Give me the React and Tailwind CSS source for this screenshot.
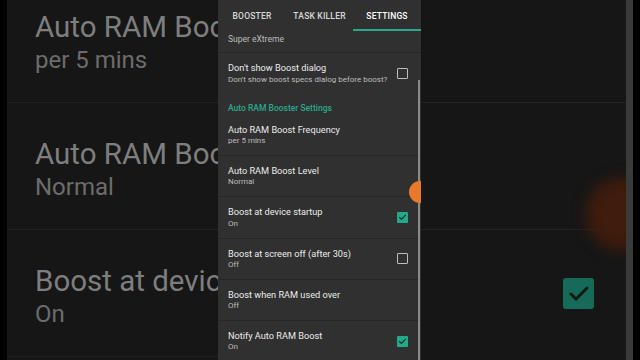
import { Check } from 'lucide-react';

const rows = [
  { title: 'Auto RAM Boost Frequency', sub: 'per 5 mins' },
  { title: 'Auto RAM Boost Level', sub: 'Normal' },
  { title: 'Boost at device startup', sub: 'On', box: 'on' },
  { title: 'Boost at screen off (after 30s)', sub: 'Off', box: 'off' },
  { title: 'Boost when RAM used over', sub: 'Off' },
  { title: 'Notify Auto RAM Boost', sub: 'On', box: 'on' },
];

const bgRows = [
  { title: 'Auto RAM Boost Frequency', sub: 'per 5 mins' },
  { title: 'Auto RAM Boost Level', sub: 'Normal' },
  { title: 'Boost at device startup', sub: 'On' },
];

function Box({ state }) {
  if (state === 'on') {
    return (
      <div className="w-[11px] h-[11px] rounded-[1px] bg-[#22a88a] flex items-center justify-center">
        <Check size={9} strokeWidth={3} className="text-[#1c2a26]" />
      </div>
    );
  }
  return <div className="w-[11px] h-[11px] rounded-[1px] border-[1.5px] border-[#bdbdbd]" />;
}

function Phone() {
  return (
    <div className="relative w-[203px] h-full bg-[#303030] overflow-hidden shrink-0">
      {/* Tabs */}
      <div className="h-[32px] flex items-center text-[8.5px] font-medium tracking-[0.2px] text-[#d8d8d8]">
        <div className="w-[68px] text-center">BOOSTER</div>
        <div className="w-[67px] text-center">TASK KILLER</div>
        <div className="relative w-[68px] h-full flex items-center justify-center text-white">
          SETTINGS
          <div className="absolute left-0 right-0 bottom-[1px] h-[2px] bg-[#2ba88c]" />
        </div>
      </div>

      <div className="px-[10px] h-[21px] flex items-start pt-[1px] text-[8.5px] text-[#bdbdbd] border-b border-[#262626]">
        Super eXtreme
      </div>

      <div className="h-[41px] pl-[10px] pr-[13px] flex items-center justify-between">
        <div className="leading-none">
          <div className="text-[9.2px] text-[#ececec]">Don't show Boost dialog</div>
          <div className="text-[8px] text-[#bdbdbd] mt-[3px]">Don't show boost specs dialog before boost?</div>
        </div>
        <Box state="off" />
      </div>

      <div className="h-[21px] px-[10px] flex items-center pt-[8px] text-[8.5px] font-medium text-[#2ba88c] leading-none">
        Auto RAM Booster Settings
      </div>

      {rows.map((r) => (
        <div
          key={r.title}
          className="h-[41.2px] pl-[10px] pr-[13px] flex items-center justify-between border-b border-[#262626]"
        >
          <div className="leading-none">
            <div className="text-[9.2px] text-[#ececec]">{r.title}</div>
            <div className="text-[8px] text-[#bdbdbd] mt-[3px]">{r.sub}</div>
          </div>
          {r.box && <Box state={r.box} />}
        </div>
      ))}

      {/* scrollbar + touch dot */}
      <div className="absolute right-[1px] top-[80px] bottom-0 w-[2px] bg-[#8a8a8a]" />
      <div className="absolute right-[-10px] top-[181px] w-[22px] h-[22px] rounded-full bg-[#e9792c]" />
    </div>
  );
}

function BgRow({ r }) {
  return (
    <div className="h-[127px] border-b border-[#222] pl-[28px] pt-[37px] leading-none">
      <div className="text-[29.5px] text-[#7e7e7e] whitespace-nowrap">{r.title}</div>
      <div className="text-[24px] text-[#6c6c6c] mt-[5px] whitespace-nowrap">{r.sub}</div>
    </div>
  );
}

export default function App() {
  return (
    <div
      className="w-[640px] h-[360px] flex bg-black overflow-hidden"
      style={{ fontFamily: 'Roboto, "Noto Sans", sans-serif' }}
    >
      <div className="w-[7px] shrink-0 bg-black" />

      {/* left blurred background */}
      <div className="w-[211px] h-full shrink-0 bg-[#161616] overflow-hidden">
        <div className="-mt-[24px]">
          {bgRows.map((r) => (
            <BgRow key={r.title} r={r} />
          ))}
        </div>
      </div>

      <Phone />

      {/* right blurred background */}
      <div className="relative w-[205px] shrink-0 bg-[#161616] overflow-hidden">
        <div className="h-[103px] border-b border-[#232323]" />
        <div className="h-[127px] border-b border-[#232323]" />
        <div className="h-[127px] flex items-start justify-end pr-[32px] pt-[48px]">
          <div className="w-[31px] h-[31px] rounded-[3px] bg-[#156a58] flex items-center justify-center">
            <Check size={24} strokeWidth={3} className="text-[#101814]" />
          </div>
        </div>
        <div className="absolute right-[-32px] top-[178px] w-[72px] h-[72px] rounded-full bg-[#3f1c0c] blur-[7px]" />
      </div>

      <div className="w-[7px] shrink-0 bg-[#3a3a3a]" />
      <div className="flex-1 bg-black" />
    </div>
  );
}
